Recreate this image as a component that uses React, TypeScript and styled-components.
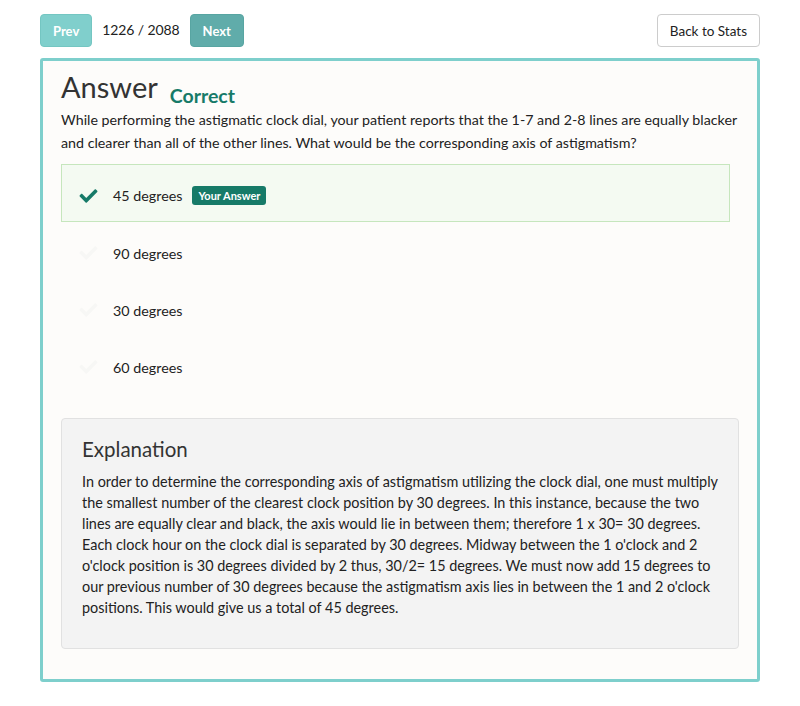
import React from "react";
import styled, { createGlobalStyle } from "styled-components";
import { FaCheck } from "react-icons/fa";

const Global = createGlobalStyle`
  html, body { margin: 0; padding: 0; background: #ffffff; }
  body { font-family: Lato, "Open Sans", sans-serif; color: #333; }
  * { box-sizing: border-box; }
`;

const Page = styled.div`
  padding: 14px 40px 24px 40px;
`;

const Toolbar = styled.div`
  display: flex;
  align-items: center;
  height: 33px;
`;

const NavButton = styled.button<{ $dark?: boolean }>`
  height: 33px;
  padding: 0 12px;
  border: 1px solid ${(p) => (p.$dark ? "#58a5a2" : "#74c6c2")};
  border-radius: 4px;
  background: ${(p) => (p.$dark ? "#60acaa" : "#80cfcc")};
  color: #fff;
  font-family: Lato, sans-serif;
  font-weight: 700;
  font-size: 13px;
  cursor: pointer;
`;

const Counter = styled.span`
  margin: 0 10px;
  font-size: 14px;
  letter-spacing: -0.1px;
  color: #222;
  position: relative;
  top: -1px;
`;

const Spacer = styled.div`
  flex: 1;
`;

const BackButton = styled.button`
  height: 33px;
  padding: 0 12px;
  border: 1px solid #cccccc;
  border-radius: 4px;
  background: #fff;
  color: #222;
  font-family: Lato, sans-serif;
  font-size: 13.5px;
`;

const Card = styled.div`
  margin-top: 11px;
  border: 3px solid #7ecfcc;
  border-radius: 3px;
  background: #fdfcfa;
  padding: 6px 18px 30px 18px;
`;

const TitleRow = styled.div`
  display: flex;
  align-items: baseline;
  gap: 12px;
`;

const Title = styled.h1`
  margin: 0;
  font-size: 29px;
  font-weight: 400;
  color: #333;
  line-height: 40px;
`;

const Status = styled.span`
  font-size: 19.5px;
  font-weight: 700;
  color: #167a68;
  position: relative;
  top: 5px;
`;

const Question = styled.p`
  margin: 1px 0 0 0;
  font-size: 14.25px;
  line-height: 23px;
  color: #222;
  white-space: nowrap;
`;

const Options = styled.div`
  margin-top: 10px;
  margin-right: 9px;
  display: flex;
  flex-direction: column;
`;

const Option = styled.div<{ $selected?: boolean }>`
  display: flex;
  align-items: center;
  height: ${(p) => (p.$selected ? "58px" : "57px")};
  padding: 5px 16px 0 16px;
  border: 1px solid ${(p) => (p.$selected ? "#c6e6bd" : "transparent")};
  background: ${(p) => (p.$selected ? "#f4faf2" : "transparent")};
`;

const CheckIcon = styled(FaCheck)<{ $on?: boolean }>`
  width: 21px;
  height: 18px;
  color: ${(p) => (p.$on ? "#167a68" : "#f7f7f5")};
  margin-right: 14px;
  flex-shrink: 0;
`;

const OptionText = styled.span`
  font-size: 14.3px;
  color: #222;
`;

const Badge = styled.span`
  margin-left: 10px;
  background: #167a68;
  color: #fff;
  font-size: 11px;
  font-weight: 700;
  height: 19px;
  line-height: 19px;
  padding: 0 6px;
  border-radius: 3px;
`;

const Explanation = styled.div`
  margin-top: 25px;
  background: #f3f3f3;
  border: 1px solid #e1e1e1;
  border-radius: 4px;
  padding: 16px 20px 30px 20px;
`;

const ExplTitle = styled.h2`
  margin: 0;
  font-size: 20.5px;
  font-weight: 400;
  color: #333;
  line-height: 28px;
`;

const ExplBody = styled.p`
  margin: 8px 0 0 0;
  font-size: 14.4px;
  line-height: 21px;
  color: #222;
  white-space: nowrap;
`;

const options = ["45 degrees", "90 degrees", "30 degrees", "60 degrees"];

const explLines = [
  "In order to determine the corresponding axis of astigmatism utilizing the clock dial, one must multiply",
  "the smallest number of the clearest clock position by 30 degrees. In this instance, because the two",
  "lines are equally clear and black, the axis would lie in between them; therefore 1 x 30= 30 degrees.",
  "Each clock hour on the clock dial is separated by 30 degrees. Midway between the 1 o'clock and 2",
  "o'clock position is 30 degrees divided by 2 thus, 30/2= 15 degrees. We must now add 15 degrees to",
  "our previous number of 30 degrees because the astigmatism axis lies in between the 1 and 2 o'clock",
  "positions. This would give us a total of 45 degrees.",
];

export default function App() {
  return (
    <Page>
      <Global />
      <Toolbar>
        <NavButton>Prev</NavButton>
        <Counter>1226 / 2088</Counter>
        <NavButton $dark>Next</NavButton>
        <Spacer />
        <BackButton>Back to Stats</BackButton>
      </Toolbar>
      <Card>
        <TitleRow>
          <Title>Answer</Title>
          <Status>Correct</Status>
        </TitleRow>
        <Question>
          While performing the astigmatic clock dial, your patient reports that the 1-7 and 2-8 lines are equally blacker
          <br />
          and clearer than all of the other lines. What would be the corresponding axis of astigmatism?
        </Question>
        <Options>
          {options.map((o, i) => (
            <Option key={o} $selected={i === 0}>
              <CheckIcon $on={i === 0} />
              <OptionText>{o}</OptionText>
              {i === 0 && <Badge>Your Answer</Badge>}
            </Option>
          ))}
        </Options>
        <Explanation>
          <ExplTitle>Explanation</ExplTitle>
          <ExplBody>
            {explLines.map((l, i) => (
              <React.Fragment key={i}>
                {l}
                {i < explLines.length - 1 && <br />}
              </React.Fragment>
            ))}
          </ExplBody>
        </Explanation>
      </Card>
    </Page>
  );
}
